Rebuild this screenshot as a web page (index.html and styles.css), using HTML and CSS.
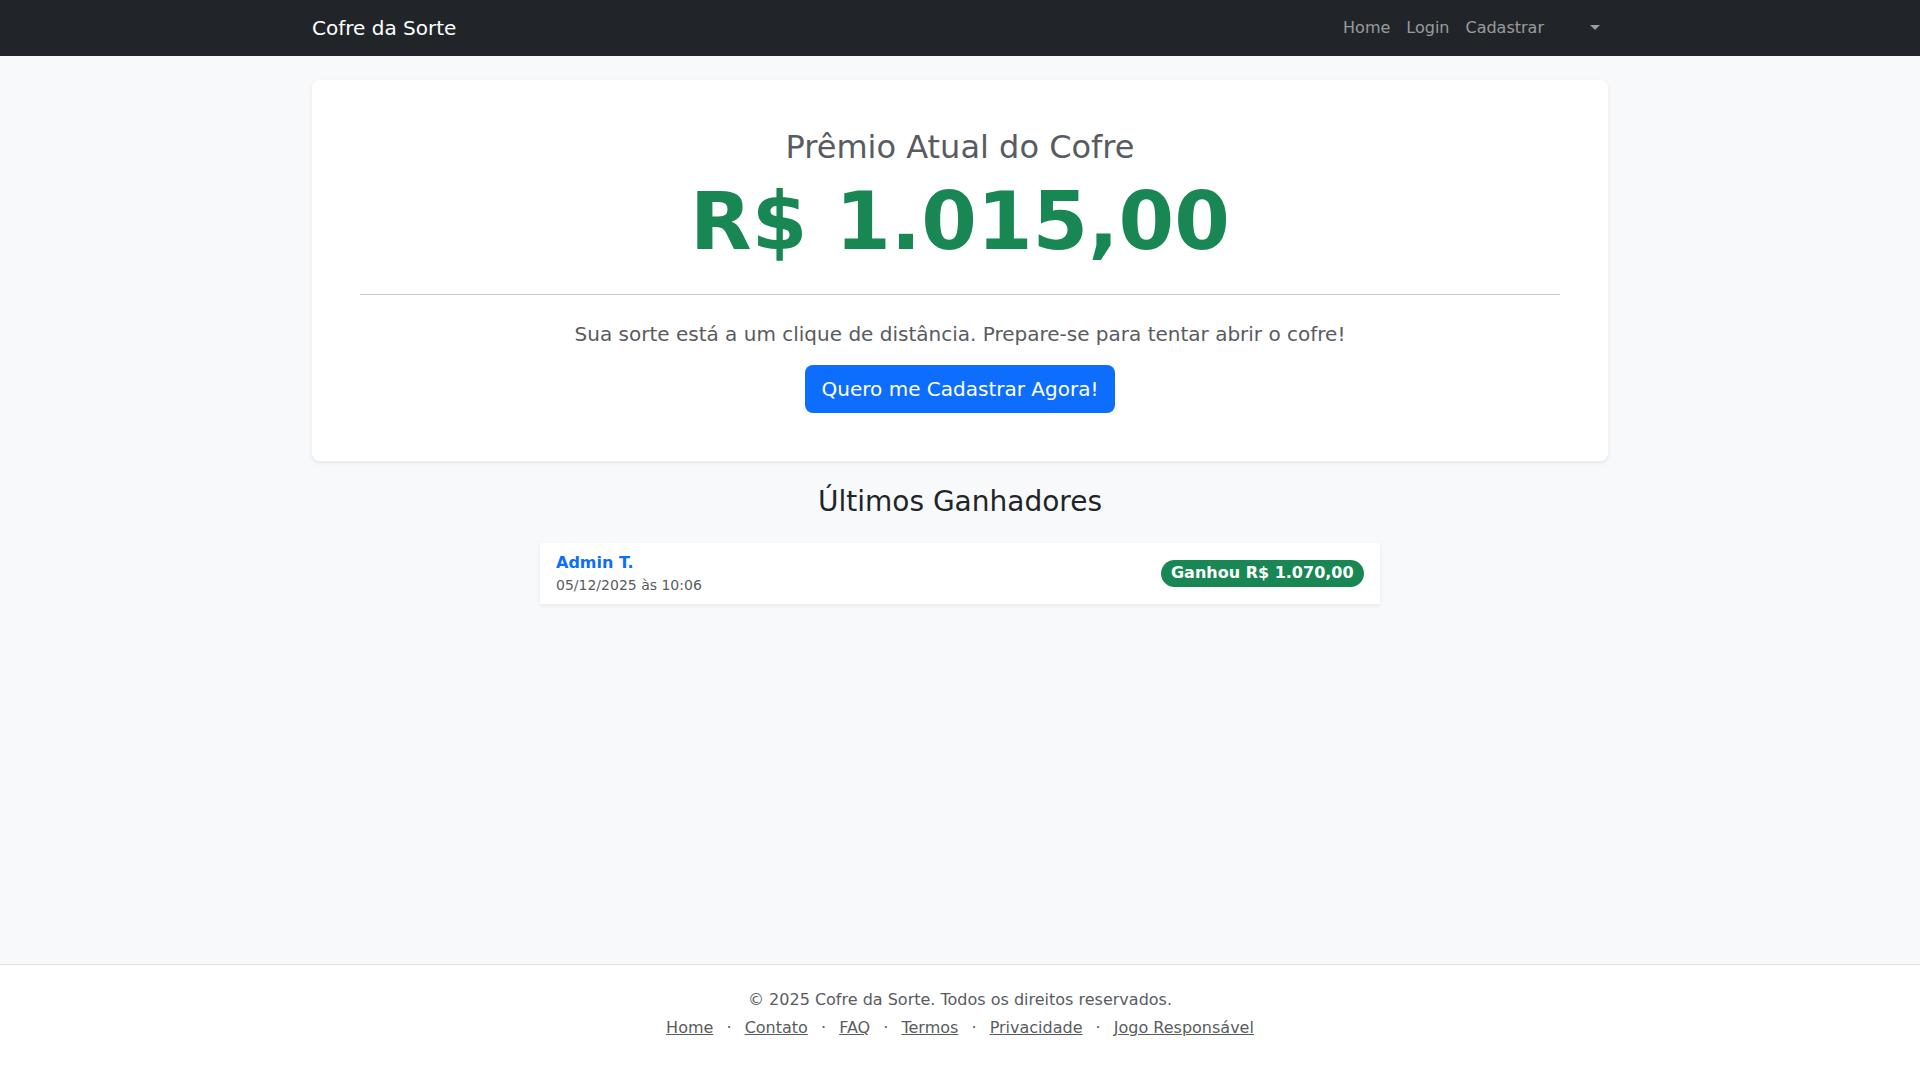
FILE: index.html
```html
<!DOCTYPE html>
<html lang="pt-BR">
<head>
    <meta charset="UTF-8">
    <title>Cofre da Sorte</title>
    <link rel="stylesheet" href="styles.css">
</head>
<body>
<nav class="topbar">
    <div class="wrap topbar-inner">
        <a class="brand" href="#">Cofre da Sorte</a>
        <ul class="menu">
            <li><a href="#">Home</a></li>
            <li><a href="#">Login</a></li>
            <li><a href="#">Cadastrar</a></li>
            <li class="menu-drop"><a href="#" class="drop-toggle"><span class="drop-label"></span></a></li>
        </ul>
    </div>
</nav>

<main class="wrap">
    <section class="prize-card">
        <h2 class="prize-title">Prêmio Atual do Cofre</h2>
        <p class="prize-amount">R$ 1.015,00</p>
        <hr class="prize-rule">
        <p class="lead">Sua sorte está a um clique de distância. Prepare-se para tentar abrir o cofre!</p>
        <a href="#" class="btn-cta">Quero me Cadastrar Agora!</a>
    </section>

    <h3 class="winners-title">Últimos Ganhadores</h3>
    <ul class="winners">
        <li class="winner">
            <div class="winner-info">
                <a href="#" class="winner-name">Admin T.</a>
                <small class="winner-date">05/12/2025 às 10:06</small>
            </div>
            <span class="badge">Ganhou R$ 1.070,00</span>
        </li>
    </ul>
</main>

<footer class="site-footer">
    <p class="copy">© 2025 Cofre da Sorte. Todos os direitos reservados.</p>
    <p class="footer-links">
        <a href="#">Home</a> <span class="sep">·</span>
        <a href="#">Contato</a> <span class="sep">·</span>
        <a href="#">FAQ</a> <span class="sep">·</span>
        <a href="#">Termos</a> <span class="sep">·</span>
        <a href="#">Privacidade</a> <span class="sep">·</span>
        <a href="#">Jogo Responsável</a>
    </p>
</footer>
</body>
</html>
```

FILE: styles.css
```css
* {
    margin: 0;
    padding: 0;
    box-sizing: border-box;
}
body {
    font-family: "DejaVu Sans", "Noto Sans", sans-serif;
    font-size: 16px;
    line-height: 1.5;
    color: #212529;
    background: #f8f9fa;
    min-height: 100vh;
    display: flex;
    flex-direction: column;
}
a {
    text-decoration: none;
}
.wrap {
    width: 1320px;
    margin: 0 auto;
    padding: 0 12px;
}

/* barra superior */
.topbar {
    background: #212529;
    padding: 8px 0;
}
.topbar-inner {
    display: flex;
    align-items: center;
    justify-content: space-between;
}
.brand {
    color: #fff;
    font-size: 20px;
    line-height: 30px;
    padding: 5px 0;
}
.menu {
    list-style: none;
    display: flex;
}
.menu a {
    display: block;
    color: rgba(255, 255, 255, .55);
    padding: 8px;
    line-height: 24px;
}
.menu-drop {
    margin-left: 26px;
}
.drop-toggle::after {
    content: "";
    display: inline-block;
    margin-left: 4px;
    vertical-align: 3px;
    border-top: 5px solid;
    border-right: 5px solid transparent;
    border-left: 5px solid transparent;
}

/* cartão do prêmio */
.prize-card {
    margin-top: 24px;
    margin-bottom: 24px;
    background: #fff;
    border-radius: 8px;
    box-shadow: 0 2px 4px rgba(0, 0, 0, .075);
    padding: 48px;
    text-align: center;
}
.prize-title {
    font-size: 32px;
    font-weight: 400;
    line-height: 1.2;
    color: #595c5f;
    margin-bottom: 8px;
}
.prize-amount {
    font-size: 80px;
    font-weight: 700;
    line-height: 1.2;
    color: #198754;
}
.prize-rule {
    border: 0;
    border-top: 1px solid #c8c9ca;
    margin: 24px 0;
}
.lead {
    font-size: 20px;
    font-weight: 400;
    color: #595c5f;
    margin-bottom: 16px;
}
.btn-cta {
    display: inline-block;
    background: #0d6efd;
    color: #fff;
    font-size: 20px;
    line-height: 30px;
    padding: 9px 17px;
    border-radius: 8px;
}

/* ganhadores */
.winners-title {
    text-align: center;
    font-size: 28px;
    font-weight: 400;
    line-height: 1.2;
    margin-bottom: 24px;
}
.winners {
    list-style: none;
    width: 840px;
    margin: 0 auto;
}
.winner {
    display: flex;
    align-items: center;
    justify-content: space-between;
    background: #fff;
    padding: 8px 16px;
    box-shadow: 0 2px 4px rgba(0, 0, 0, .075);
}
.winner-info {
    display: flex;
    flex-direction: column;
}
.winner-name {
    color: #0d6efd;
    font-weight: 700;
}
.winner-date {
    font-size: 14px;
    color: #595c5f;
}
.badge {
    background: #198754;
    color: #fff;
    font-size: 16px;
    font-weight: 700;
    line-height: 1;
    padding: 5.6px 10.4px;
    border-radius: 50rem;
}

/* rodapé */
.site-footer {
    margin-top: auto;
    background: #fff;
    border-top: 1px solid #dee2e6;
    padding: 23px 0 24px;
    text-align: center;
    color: #595c5f;
}
.copy {
    margin-bottom: 4px;
}
.footer-links {
    margin-bottom: 16px;
}
.footer-links a {
    color: #595c5f;
    text-decoration: underline;
}
.sep {
    margin: 0 8px;
}
```
